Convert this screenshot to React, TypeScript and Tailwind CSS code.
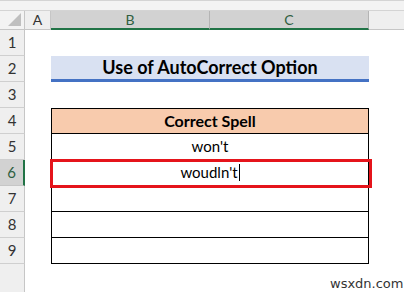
import React from "react";

const rows = [1, 2, 3, 4, 5, 6, 7, 8, 9];

export default function App() {
  return (
    <div className="relative w-[404px] h-[292px] overflow-hidden bg-white" style={{ fontFamily: "Lato, 'Liberation Sans', sans-serif" }}>
      {/* top strip */}
      <div className="h-[11px] bg-[#f3f3f3] border-t border-b border-[#d4d4d4]" />

      {/* column headers */}
      <div className="flex h-[19px] text-[14px] leading-none">
        <div className="w-[25px] bg-[#f3f3f3] border-b border-r border-[#c6c6c6] flex items-end justify-end pr-[3px] pb-[3px]">
          <svg width="13" height="13" viewBox="0 0 13 13">
            <polygon points="13,0 13,13 0,13" fill="#bfbfbf" />
          </svg>
        </div>
        <div className="w-[26px] bg-[#efefef] border-b border-r border-[#c6c6c6] flex items-center justify-center text-[#333]">A</div>
        <div className="w-[159px] bg-[#d2d2d2] border-b-2 border-r border-r-[#b4b4b4] border-b-[#217346] flex items-center justify-center text-[#2f5e3f]">B</div>
        <div className="w-[159px] bg-[#d2d2d2] border-b-2 border-r border-r-[#b4b4b4] border-b-[#217346] flex items-center justify-center text-[#2f5e3f]">C</div>
        <div className="flex-1 bg-[#efefef] border-b border-[#c6c6c6]" />
      </div>

      <div className="flex">
        {/* row headers */}
        <div className="w-[25px] flex flex-col">
          {rows.map((r) => (
            <div
              key={r}
              className={
                r === 6
                  ? "h-[26px] bg-[#d2d2d2] border-b border-[#c6c6c6] border-r-2 border-r-[#217346] flex items-center justify-center text-[15px] text-[#2f5e3f]"
                  : "h-[26px] bg-[#efefef] border-b border-[#cfcfcf] border-r border-r-[#c6c6c6] flex items-center justify-center text-[15px] text-[#333]"
              }
            >
              {r}
            </div>
          ))}
          <div className="h-[40px] bg-[#efefef] border-r border-[#c6c6c6]" />
        </div>

        {/* sheet */}
        <div className="flex-1 pl-[26px] flex flex-col text-[15px] text-black">
          <div className="h-[26px]" />
          <div className="w-[318px] h-[26px] bg-[#d9e1f2] border-b-[3px] border-[#4472c4] flex items-center justify-center font-bold text-[18px]">
            Use of AutoCorrect Option
          </div>
          <div className="h-[26px]" />
          <div className="relative w-[318px] border-t border-l border-r border-black">
            <div className="h-[25px] bg-[#f8cbad] border-b border-black flex items-center justify-center font-bold text-[16px]">
              Correct Spell
            </div>
            <div className="h-[26px] border-b border-black flex items-center justify-center">won't</div>
            <div className="h-[26px] border-b border-black flex items-center justify-center">
              woudln't<span className="inline-block w-px h-[17px] bg-black ml-px" />
            </div>
            <div className="h-[26px] border-b border-black" />
            <div className="h-[26px] border-b border-black" />
            <div className="h-[26px] border-b border-black" />
            <div className="absolute left-[-2px] top-[50px] w-[322px] h-[29px] border-[3px] border-[#e5141b]" />
          </div>
        </div>
      </div>

      <div className="absolute left-[330px] top-[274px] text-[13px] text-[#333]" style={{ fontFamily: "'DejaVu Sans', sans-serif" }}>
        wsxdn.com
      </div>
    </div>
  );
}
